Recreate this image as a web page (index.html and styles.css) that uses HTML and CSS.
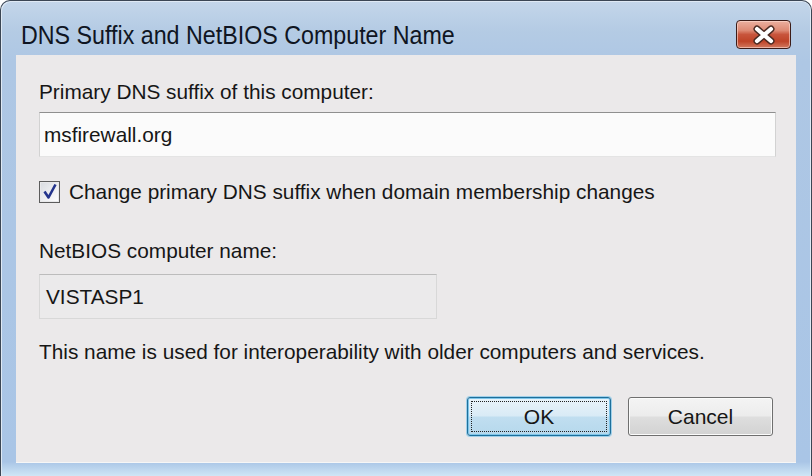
FILE: index.html
```html
<!DOCTYPE html>
<html>
<head>
<meta charset="utf-8">
<link rel="stylesheet" href="styles.css">
</head>
<body>
<div class="window">
  <div class="titlebar">
    <span class="title">DNS Suffix and NetBIOS Computer Name</span>
    <div class="close">
      <svg width="24" height="20" viewBox="0 0 24 20">
        <path d="M5 4 L19 16 M19 4 L5 16" stroke="#4a2a22" stroke-width="7" stroke-linecap="round"/>
        <path d="M5 4 L19 16 M19 4 L5 16" stroke="#ffffff" stroke-width="4.2" stroke-linecap="round"/>
      </svg>
    </div>
  </div>
  <div class="client">
    <div class="label first">Primary DNS suffix of this computer:</div>
    <div class="field edit">msfirewall.org</div>
    <div class="check-row">
      <div class="checkbox">
        <svg width="16" height="17" viewBox="0 0 16 17">
          <path d="M2.5 8.5 L6.5 14.5 L13.5 1.5" fill="none" stroke="#23348c" stroke-width="2.6" stroke-linejoin="round"/>
        </svg>
      </div>
      <span class="check-label">Change primary DNS suffix when domain membership changes</span>
    </div>
    <div class="label second">NetBIOS computer name:</div>
    <div class="field readonly">VISTASP1</div>
    <div class="label desc">This name is used for interoperability with older computers and services.</div>
    <div class="buttons">
      <div class="btn ok"><span class="focus">OK</span></div>
      <div class="btn cancel">Cancel</div>
    </div>
  </div>
</div>
</body>
</html>
```

FILE: styles.css
```css
html, body {
  margin: 0;
  padding: 0;
  background: #ffffff;
}
body {
  width: 812px;
  height: 476px;
  overflow: hidden;
  font-family: "Liberation Sans", Arial, sans-serif;
  color: #161616;
}
.window {
  box-sizing: border-box;
  width: 812px;
  height: 476px;
  border: 1px solid #3b4654;
  border-bottom: none;
  border-radius: 10px 10px 0 0;
  background: linear-gradient(180deg, #c4d6ea 0px, #b4cbe4 30px, #aec7e4 60px, #a9c5e6 97%, #cfe6f6 100%);
  box-shadow: inset 1px 1px 0 #dfe9f4, inset -1px 0 0 #dfe9f4;
  display: flex;
  flex-direction: column;
  padding: 0 15px 13px 15px;
}
.titlebar {
  box-sizing: border-box;
  height: 54px;
  display: flex;
  align-items: flex-start;
  justify-content: space-between;
  padding: 19px 5px 0 5px;
}
.title {
  display: inline-block;
  font-size: 25px;
  line-height: 28px;
  margin-top: 1px;
  color: #0f1522;
  transform: scaleX(0.93);
  transform-origin: left center;
  white-space: nowrap;
}
.close {
  box-sizing: border-box;
  width: 55px;
  height: 29px;
  border: 1px solid #3c1c18;
  border-radius: 4px;
  background: linear-gradient(180deg, #ebb0a0 0%, #de8a74 35%, #c8553c 50%, #bf4428 75%, #d27a60 100%);
  box-shadow: inset 0 0 0 1px rgba(255, 220, 210, 0.6);
  display: flex;
  align-items: center;
  justify-content: center;
}
.client {
  flex: 1;
  background: #ebe9ea;
  border-bottom: 1px solid #f6f6f6;
  padding: 25px 23px 0 23px;
  display: flex;
  flex-direction: column;
}
.label {
  font-size: 20.8px;
  line-height: 24px;
  white-space: nowrap;
}
.field {
  box-sizing: border-box;
  height: 45px;
  font-size: 20.8px;
  line-height: 24px;
  padding: 10px 4px 0 4px;
  white-space: nowrap;
}
.edit {
  margin-top: 8px;
  width: 737px;
  background: #fbfbfb;
  border: 1px solid #d2d2d2;
  border-top-color: #8f8f8f;
  border-bottom-color: #e4e4e4;
}
.check-row {
  margin-top: 23px;
  height: 23px;
  display: flex;
  align-items: center;
}
.checkbox {
  box-sizing: border-box;
  width: 21px;
  height: 22px;
  border: 1px solid #5c5c5c;
  background: linear-gradient(135deg, #d8dbe0 0%, #f4f4f6 70%, #ffffff 100%);
  box-shadow: inset 0 0 0 1px #e8e8ea;
  display: flex;
  align-items: center;
  justify-content: center;
}
.check-label {
  margin-left: 9px;
  font-size: 20.8px;
  line-height: 24px;
  white-space: nowrap;
}
.second {
  margin-top: 36px;
}
.readonly {
  margin-top: 11px;
  width: 398px;
  background: #ebeaeb;
  border: 1px solid #d8d8d8;
  border-top-color: #bcbcbc;
  padding-left: 6px;
}
.desc {
  margin-top: 21px;
}
.buttons {
  margin-top: 33px;
  display: flex;
  justify-content: flex-end;
  gap: 17px;
}
.btn {
  box-sizing: border-box;
  height: 39px;
  font-size: 21px;
  border-radius: 3px;
  display: flex;
  align-items: center;
  justify-content: center;
}
.ok {
  width: 144px;
  border: 1px solid #1f6f9a;
  background: linear-gradient(180deg, #eaf4fa 0%, #d9ebf6 48%, #c0def0 52%, #b6d8ec 100%);
  box-shadow: 0 0 0 1px #9fd0ea, inset 0 0 0 1px #7fc6ea;
  padding: 3px;
}
.focus {
  box-sizing: border-box;
  width: 100%;
  height: 100%;
  border: 1px dotted #222;
  display: flex;
  align-items: center;
  justify-content: center;
}
.cancel {
  width: 145px;
  border: 1px solid #6f6f6f;
  background: linear-gradient(180deg, #f4f4f4 0%, #ececec 48%, #dedede 52%, #d2d2d2 100%);
  box-shadow: inset 0 0 0 1px #fbfbfb;
}
```
